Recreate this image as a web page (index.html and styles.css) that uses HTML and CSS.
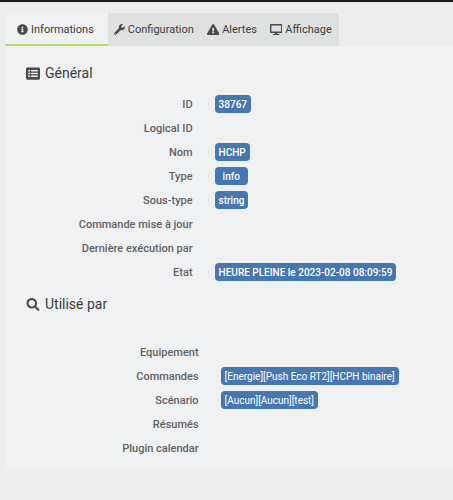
FILE: index.html
```html
<!DOCTYPE html>
<html lang="fr">
<head>
  <meta charset="UTF-8" />
  <title>Configuration commande</title>
  <link rel="stylesheet" href="styles.css">
</head>
<body>
<div class="topbar"></div>
<main class="container">
  <!-- Tabs -->
  <nav class="tabs">
    <a class="tab active" href="#informations">
      <svg class="icon" viewBox="0 0 512 512"><path d="M256 8C119 8 8 119 8 256s111 248 248 248 248-111 248-248S393 8 256 8zm0 110a42 42 0 1 1 0 84 42 42 0 0 1 0-84zm56 254c0 7-5 12-12 12h-88c-7 0-12-5-12-12v-24c0-7 5-12 12-12h12v-64h-12c-7 0-12-5-12-12v-24c0-7 5-12 12-12h64c7 0 12 5 12 12v100h12c7 0 12 5 12 12z"/></svg>
      Informations
    </a>
    <a class="tab" href="#configuration">
      <svg class="icon" viewBox="0 0 512 512"><path d="M507.700 109.100c-2.200-9-13.500-12.100-20.100-5.500l-74.400 74.400-67.900-11.300L334 98.900l74.400-74.400c6.600-6.600 3.400-17.900-5.700-20.200-47.400-11.700-99.600.9-136.600 37.900-39.600 39.600-50.500 97.100-34.100 147.200L18.700 402.800c-25 25-25 65.500 0 90.500s65.500 25 90.500 0l213.200-213.200c50.100 16.700 107.500 5.700 147.400-34.200 37.100-37.100 49.700-89.300 37.900-136.800zM64 472c-13.200 0-24-10.800-24-24 0-13.300 10.700-24 24-24s24 10.700 24 24c0 13.200-10.700 24-24 24z"/></svg>
      Configuration
    </a>
    <a class="tab" href="#alertes">
      <svg class="icon" viewBox="0 0 576 512"><path d="M569.500 440c18.500 32-4.700 72-41.600 72H48c-36.900 0-60-40-41.500-72L246.400 24c18.500-32 64.700-32 83.200 0l239.900 416zM288 354a46 46 0 1 0 0 92 46 46 0 0 0 0-92zm-43.700-165.300l7.400 136c.4 6.400 5.600 11.300 12 11.300h48.600c6.400 0 11.600-5 12-11.300l7.400-136c.4-6.900-5.100-12.700-12-12.700h-63.400c-6.900 0-12.400 5.800-12 12.700z"/></svg>
      Alertes
    </a>
    <a class="tab" href="#affichage">
      <svg class="icon" viewBox="0 0 576 512"><path d="M528 0H48C21.500 0 0 21.500 0 48v320c0 26.500 21.500 48 48 48h192l-16 48h-72c-13.300 0-24 10.700-24 24s10.700 24 24 24h272c13.300 0 24-10.700 24-24s-10.700-24-24-24h-72l-16-48h192c26.500 0 48-21.500 48-48V48c0-26.500-21.500-48-48-48zm-16 352H64V64h448v288z"/></svg>
      Affichage
    </a>
  </nav>

  <div class="panel">
    <!-- General information -->
    <h2 class="legend">
      <svg class="icon" viewBox="0 0 512 448"><path fill-rule="evenodd" d="M48 0h416c26 0 48 22 48 48v352c0 26-22 48-48 48H48c-26 0-48-22-48-48V48C0 22 22 0 48 0zM80 92h70v60H80zm106 0h246v60H186zM80 194h70v60H80zm106 0h246v60H186zM80 296h70v60H80zm106 0h246v60H186z"/></svg>
      Général
    </h2>
    <dl class="fields">
      <dt>ID</dt>
      <dd><span class="label">38767</span></dd>
      <dt>Logical ID</dt>
      <dd></dd>
      <dt>Nom</dt>
      <dd><span class="label">HCHP</span></dd>
      <dt>Type</dt>
      <dd><span class="label type">info</span></dd>
      <dt>Sous-type</dt>
      <dd><span class="label">string</span></dd>
      <dt>Commande mise à jour</dt>
      <dd></dd>
      <dt>Dernière exécution par</dt>
      <dd></dd>
      <dt>Etat</dt>
      <dd><span class="label">HEURE PLEINE le 2023-02-08 08:09:59</span></dd>
    </dl>

    <!-- Where the command is used -->
    <h2 class="legend">
      <svg class="icon" viewBox="0 0 512 512"><path d="M505 442.700L405.300 343c-4.500-4.500-10.600-7-17-7H372c27.600-35.300 44-79.700 44-128C416 93.100 322.900 0 208 0S0 93.100 0 208s93.100 208 208 208c48.300 0 92.700-16.400 128-44v16.300c0 6.400 2.500 12.500 7 17l99.700 99.700c9.400 9.400 24.600 9.400 33.900 0l28.300-28.300c9.400-9.400 9.400-24.600.1-34zM208 336c-70.700 0-128-57.200-128-128 0-70.700 57.200-128 128-128 70.700 0 128 57.200 128 128 0 70.700-57.200 128-128 128z"/></svg>
      Utilisé par
    </h2>
    <dl class="fields usage">
      <dt>Equipement</dt>
      <dd></dd>
      <dt>Commandes</dt>
      <dd><a class="label" href="#commande">[Energie][Push Eco RT2][HCPH binaire]</a></dd>
      <dt>Scénario</dt>
      <dd><a class="label" href="#scenario">[Aucun][Aucun][test]</a></dd>
      <dt>Résumés</dt>
      <dd></dd>
      <dt>Plugin calendar</dt>
      <dd></dd>
    </dl>
  </div>
</main>
</body>
</html>
```

FILE: styles.css
```css
body {
  margin: 0;
  background-color: #ebeeed;
  color: #3c3c3c;
  font-family: Roboto, sans-serif;
  font-size: 11px;
}
a {
  color: inherit;
  text-decoration: none;
}
.topbar {
  height: 2px;
  background-color: #1c1c1c;
}
.container {
  padding: 11px 0 0 5px;
}
.icon {
  height: 11px;
  fill: #4a4a4a;
}
.tabs {
  display: flex;
}
.tab {
  display: flex;
  align-items: center;
  gap: 3px;
  box-sizing: border-box;
  height: 33px;
  padding: 0 7px 0 6px;
  background-color: #dfe1e0;
  white-space: nowrap;
}
.tab.active {
  padding: 2px 14px 0 12px;
  background-color: #eff1f3;
  border-bottom: 2px solid #b9dd68;
}
.panel {
  padding: 15px 0 9px;
  background-color: #eff1f3;
}
.legend {
  display: flex;
  align-items: center;
  gap: 5px;
  margin: 0;
  padding-left: 21px;
  font-size: 14px;
  font-weight: 400;
  line-height: 24px;
}
.legend .icon {
  width: 14px;
  height: 13px;
}
.fields {
  display: grid;
  grid-template-columns: 45% 55%;
  grid-auto-rows: 24px;
  align-items: center;
  margin: 7px 0 8px;
}
.fields dt {
  padding-right: 14px;
  color: #626262;
  font-weight: 500;
  text-align: right;
}
.fields dd {
  display: flex;
  margin: 0;
  padding-left: 8px;
}
.usage {
  margin: 24px 0 0;
}
.usage dt {
  padding-right: 8px;
}
.usage dd {
  padding-left: 14px;
}
/* Blue value badges */
.label {
  padding: 1px 4px 0;
  border-radius: 4px;
  background-color: #4677b1;
  color: #fff;
  font-size: 10px;
  font-weight: 500;
  line-height: 17px;
  white-space: nowrap;
}
.label.type {
  padding: 1px 8px 0;
}
.usage .label {
  font-weight: 400;
}
```
